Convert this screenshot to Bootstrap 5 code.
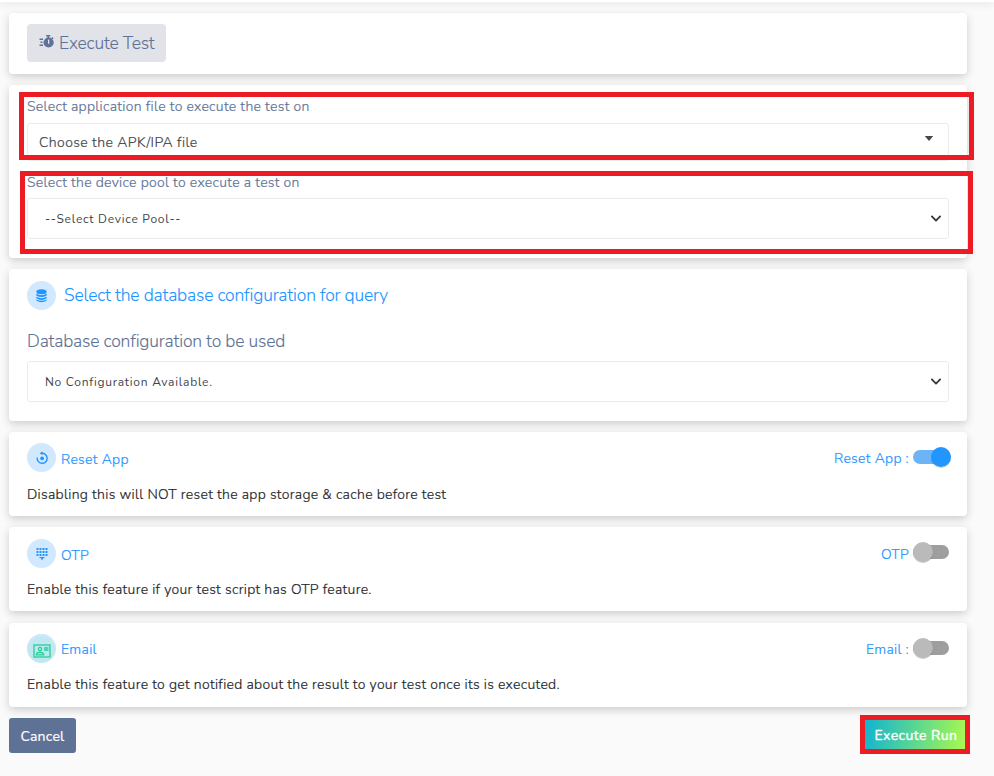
<!DOCTYPE html>
<html lang="en">
<head>
<meta charset="utf-8">
<meta name="viewport" content="width=device-width, initial-scale=1">
<title>Execute Test</title>
<link href="https://cdn.jsdelivr.net/npm/bootstrap@5.3.0/dist/css/bootstrap.min.css" rel="stylesheet">
<style>
  body { background: #fafafa; font: 300 14px/20px Nunito, Lato, sans-serif; letter-spacing: .31px; color: #212529; height: 776px; overflow: hidden; -webkit-text-stroke: .2px; }
  .topline { height: 2px; background: #fff; box-shadow: 0 2px 6px rgba(0,0,0,.16); }
  .page { width: 958px; margin: 11px 0 0 9px; gap: 11px; }
  .panel { background: #fff; border: 0; border-radius: 4px; padding: 0 18px; box-shadow: 0 3px 9px rgba(0,0,0,.18); }
  .p-title { height: 61px; padding-top: 11px; }
  .p-files { height: 173px; padding-top: 12px; }
  .p-db { height: 152px; padding-top: 12px; }
  .p-opt { height: 84px; padding-top: 11px; }
  .p-otp { padding-top: 12px; }
  .p-mail { margin-top: 1px; }
  .slate { color: #5e7296; }
  .azure { color: #2094ff; }
  .big { font-size: 17.5px; line-height: 24px; letter-spacing: -.18px; -webkit-text-stroke: .1px; }
  .tag-title { width: 139px; height: 38px; background: #e1e3e8; padding-left: 12px; gap: 4px; }
  .tag-title svg { margin-top: -3px; }
  .field { height: 41px; border: 1px solid #eaebed; border-radius: 3px; color: #495057; background-color: #fff; }
  .apk { height: 38px; padding: 2px 14px 0 11px; margin-top: 6px; color: #3f454b; letter-spacing: .42px; }
  .apk svg { margin-top: -10px; }
  .pool-label { margin-top: 12px; }
  .pool { margin-top: 5px; }
  .db-title { margin-top: -2px; }
  .db-label { margin: 19px 0 8px; }
  select.field { font-size: 12px; font-weight: 400; letter-spacing: .74px; padding: 1px 36px 0 17px; color: #3f454b; -webkit-text-stroke: 0; background-size: 14px 11px; background-position: right 5px center;
    background-image: url("data:image/svg+xml,%3csvg xmlns='http://www.w3.org/2000/svg' viewBox='0 0 16 16'%3e%3cpath fill='none' stroke='%23343a40' stroke-linecap='round' stroke-linejoin='round' stroke-width='2.700' d='m2 5 6 6 6-6'/%3e%3c/svg%3e"); }
  .disc { width: 29px; height: 29px; background: #d1e8ff; flex: none; }
  .disc.mail { background: #c1e8f1; box-shadow: inset 0 2px 2px #d1e8ff; }
  .opt-name { padding: 4px 0 0 5px; }
  .opt-switch { margin-right: -2px; }
  .opt-switch span { padding-top: 2px; margin-right: 4px; }
  .p-mail .opt-name { padding-top: 2px; }
  .opt-note { margin-top: 13px; }
  .p-otp .opt-note, .p-mail .opt-note { margin-top: 12px; }
  .sw { width: 38px; height: 22px; display: block; overflow: visible; margin-top: -2px; }
  .p-otp .sw { margin-top: -4px; }
  .btn-cancel { width: 67px; height: 35px; background: #5e7296; color: #fff; border-radius: 3px; font-size: 14px; padding: 2px 0 0; letter-spacing: .25px; }
  .btn-run { width: 110px; height: 39px; margin: -3px -3px 0 0; border: 5px solid #ed1c24; border-radius: 0; background: linear-gradient(100deg, #0fb4d2, #a9f94f) padding-box; color: #fff; font-size: 14px; padding: 2px 0 0 2px; letter-spacing: .44px; -webkit-text-stroke: .35px; }
  .callout { position: absolute; border: 5px solid #ed1c24; pointer-events: none; }
  .callout-a { left: 10px; top: 7px; width: 955px; height: 68px; }
  .callout-b { left: 11px; top: 86px; width: 953px; height: 83px; }
</style>
</head>
<body>
<div class="topline"></div>
<main class="page d-flex flex-column">

  <section class="panel p-title">
    <div class="tag-title slate rounded-1 d-flex align-items-center">
      <svg width="16" height="16" viewBox="0 0 16 16" fill="currentColor">
        <path d="M.500 4.500h3.500v1.400H.500zM1.500 7.500h2v1.400h-2zM.500 10.500h3.500v1.400H.500z"/>
        <rect x="7.200" y="1" width="4" height="1.500"/><rect x="8.500" y="2" width="1.500" height="2"/>
        <circle cx="9.600" cy="8.500" r="5.100"/><path d="M13.200 3l1.400 1.300-1 1-1.400-1.300z"/>
        <rect x="9" y="5.600" width="1.300" height="4.200" fill="#e1e3e8"/>
      </svg>
      <span class="big text-nowrap">Execute Test</span>
    </div>
  </section>

  <section class="panel p-files position-relative">
    <div class="slate">Select application file to execute the test on</div>
    <div class="field apk d-flex align-items-center justify-content-between">
      <span>Choose the APK/IPA file</span>
      <svg width="10" height="5" viewBox="0 0 10 5"><path d="M.800 0h8.400L5 5z" fill="#43484d"/></svg>
    </div>
    <div class="slate pool-label">Select the device pool to execute a test on</div>
    <select class="form-select field pool"><option>--Select Device Pool--</option></select>
    <div class="callout callout-a"></div>
    <div class="callout callout-b"></div>
  </section>

  <section class="panel p-db">
    <div class="d-flex align-items-center gap-2 azure">
      <span class="disc rounded-circle d-flex align-items-center justify-content-center">
        <svg width="11" height="14" viewBox="0 0 11 14" fill="currentColor">
          <ellipse cx="5.500" cy="2.800" rx="5.200" ry="2.500"/>
          <path d="M.300 4.800q5.200 2.800 10.400 0v1.600q-5.200 3.400-10.400 0zM.300 7.700q5.200 2.900 10.400 0v1.500q-5.200 3.400-10.400 0zM.300 10.400q5.200 2.900 10.400 0v1q-5.200 3.600-10.400 0z"/>
        </svg>
      </span>
      <span class="big db-title">Select the database configuration for query</span>
    </div>
    <div class="big slate db-label">Database configuration to be used</div>
    <select class="form-select field"><option>No Configuration Available.</option></select>
  </section>

  <section class="panel p-opt">
    <div class="d-flex justify-content-between azure">
      <div class="d-flex align-items-center">
        <span class="disc rounded-circle d-flex align-items-center justify-content-center">
          <svg width="14" height="14" viewBox="0 0 14 14" fill="none" stroke="currentColor" stroke-width="1.400">
            <path d="M6.600 2.300A5 5 0 1 1 2.200 6.500"/><circle cx="7.100" cy="7.300" r="1.900" fill="currentColor" stroke="none"/>
            <path d="M4.800 2.200L7.400.200v4z" fill="currentColor" stroke="none"/>
          </svg>
        </span>
        <span class="opt-name">Reset App</span>
      </div>
      <div class="opt-switch d-flex align-items-center">
        <span>Reset App :</span>
        <svg class="sw" viewBox="0 0 38 22"><rect x="0" y="4" width="36" height="14" rx="7" fill="#6ab4f7"/><circle cx="28" cy="12" r="10" fill="#000" opacity=".18"/><circle cx="28" cy="11" r="10" fill="#2196ff"/></svg>
      </div>
    </div>
    <div class="opt-note">Disabling this will NOT reset the app storage &amp; cache before test</div>
  </section>

  <section class="panel p-opt p-otp">
    <div class="d-flex justify-content-between azure">
      <div class="d-flex align-items-center">
        <span class="disc rounded-circle d-flex align-items-center justify-content-center">
          <svg width="12" height="12" viewBox="0 0 12 12" fill="currentColor"><path d="M.500 0h2v2h-2zM3.500 0h2v2h-2zM6.500 0h2v2h-2zM9.500 0h2v2h-2zM.500 3h2v2h-2zM3.500 3h2v2h-2zM6.500 3h2v2h-2zM9.500 3h2v2h-2zM.500 6h2v2h-2zM3.500 6h2v2h-2zM6.500 6h2v2h-2zM9.500 6h2v2h-2zM3.500 9h5v1h-5zM5 9h2v2.500h-2z"/></svg>
        </span>
        <span class="opt-name pt-1">OTP</span>
      </div>
      <div class="opt-switch d-flex align-items-center">
        <span>OTP</span>
        <svg class="sw" viewBox="0 0 38 22"><rect x="0" y="4" width="36" height="14" rx="7" fill="#9e9e9e"/><circle cx="10" cy="12" r="10" fill="#000" opacity=".22"/><circle cx="10" cy="11" r="10" fill="#bababa"/></svg>
      </div>
    </div>
    <div class="opt-note">Enable this feature if your test script has OTP feature.</div>
  </section>

  <section class="panel p-opt p-mail">
    <div class="d-flex justify-content-between azure">
      <div class="d-flex align-items-center">
        <span class="disc mail rounded-circle d-flex align-items-center justify-content-center">
          <svg class="mt-1" width="18" height="14" viewBox="0 0 18 14" fill="none" stroke="#26cf97" stroke-width="1.300">
            <rect x="1" y="1" width="16" height="12"/><circle cx="7" cy="5" r="1.600"/><path d="M3.300 10.800c0-3.400 7.400-3.400 7.400 0zM11 4h4.500M11 6h4.500"/>
          </svg>
        </span>
        <span class="opt-name">Email</span>
      </div>
      <div class="opt-switch d-flex align-items-center">
        <span>Email :</span>
        <svg class="sw" viewBox="0 0 38 22"><rect x="0" y="4" width="36" height="14" rx="7" fill="#9e9e9e"/><circle cx="10" cy="12" r="10" fill="#000" opacity=".22"/><circle cx="10" cy="11" r="10" fill="#bababa"/></svg>
      </div>
    </div>
    <div class="opt-note">Enable this feature to get notified about the result to your test once its is executed.</div>
  </section>

  <div class="d-flex justify-content-between align-items-start">
    <button class="btn btn-cancel" type="button">Cancel</button>
    <button class="btn btn-run text-nowrap" type="button">Execute Run</button>
  </div>
</main>
<script src="https://cdn.jsdelivr.net/npm/bootstrap@5.3.0/dist/js/bootstrap.bundle.min.js"></script>
</body>
</html>
